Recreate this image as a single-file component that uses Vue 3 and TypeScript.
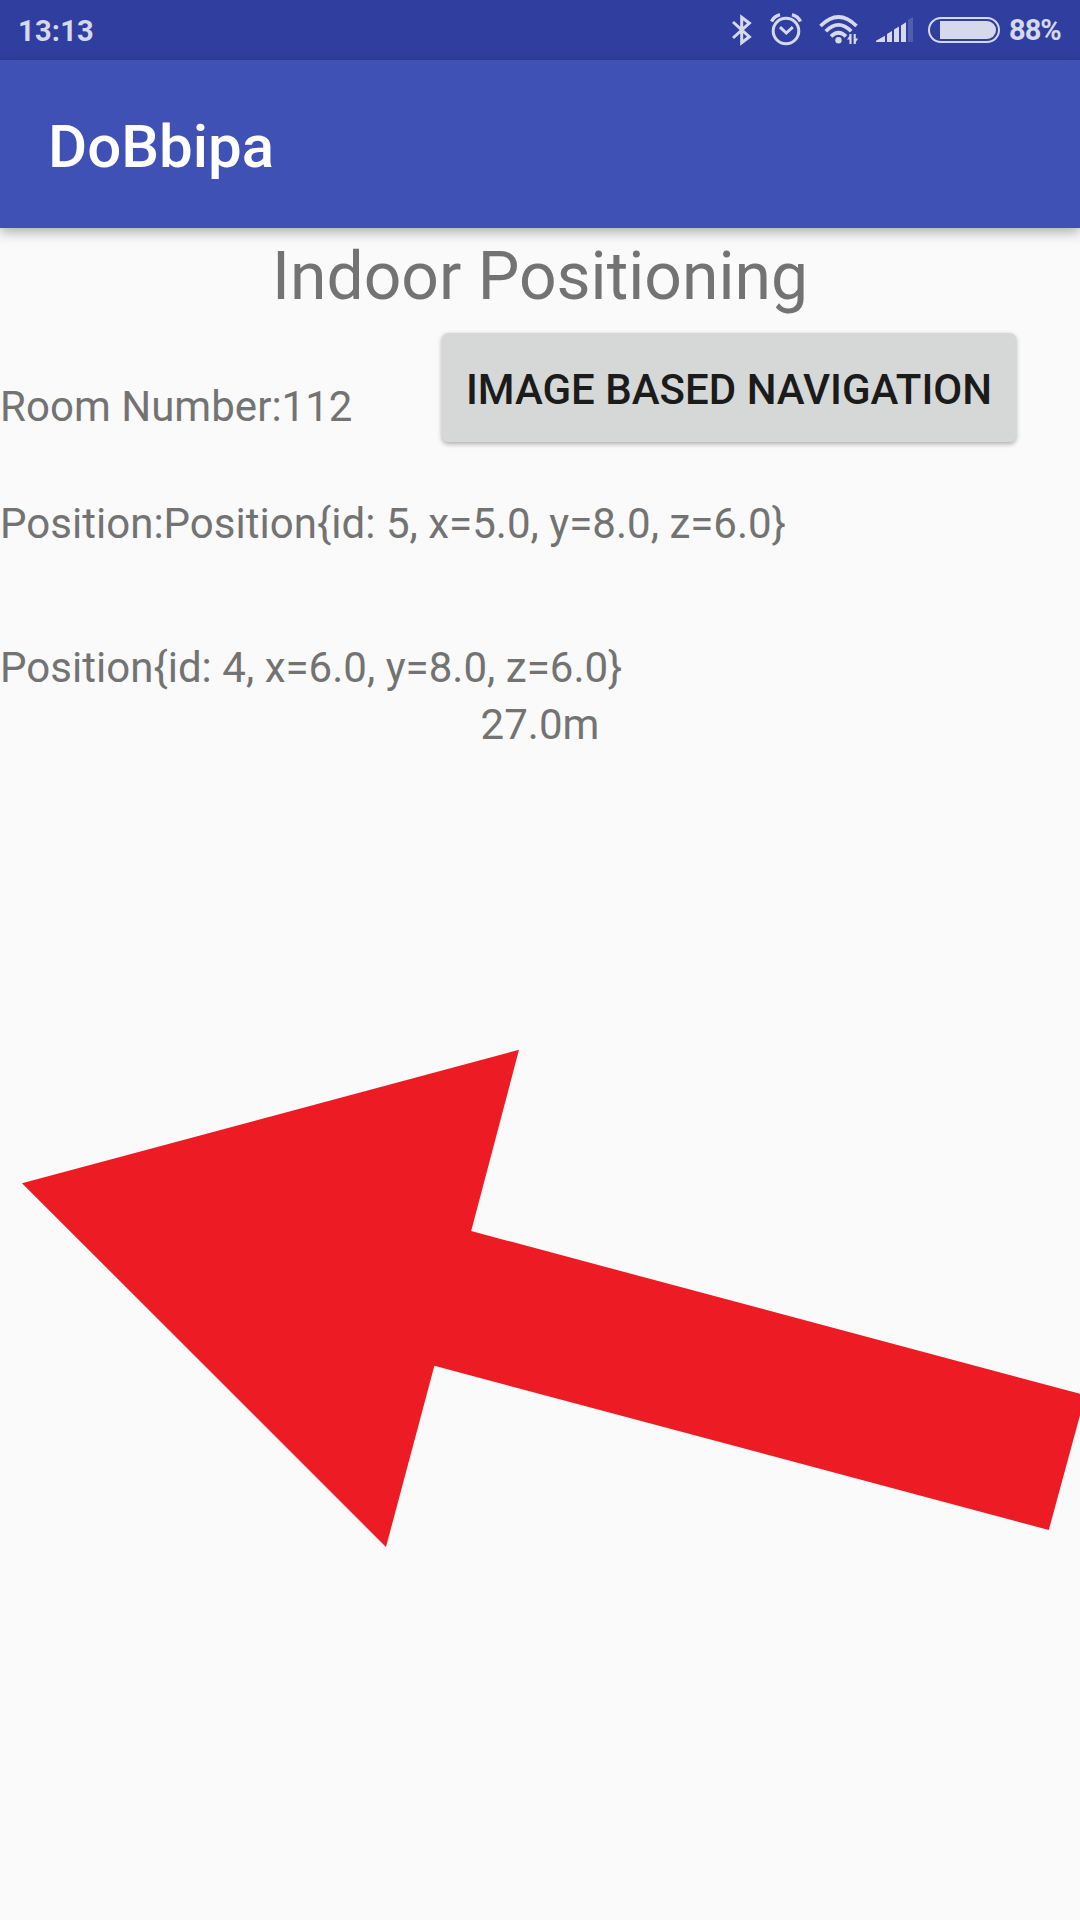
<script setup lang="ts">
import { ref } from 'vue'

interface Position {
  id: number
  x: string
  y: string
  z: string
}

const room = ref(112)
const current = ref<Position>({ id: 5, x: '5.0', y: '8.0', z: '6.0' })
const next = ref<Position>({ id: 4, x: '6.0', y: '8.0', z: '6.0' })
const distance = ref('27.0m')

const format = (p: Position): string => `Position{id: ${p.id}, x=${p.x}, y=${p.y}, z=${p.z}}`
</script>

<template>
  <div class="screen">
    <div class="status">
      <span class="clock">13:13</span>
      <div class="icons">
        <svg class="bluetooth" width="20" height="32" viewBox="0 0 20 32" fill="none" stroke="currentColor" stroke-width="3">
          <path d="M1 8 L17.4 22.8 L9.7 28.8 V3.2 L17.4 9.2 L1 24" />
        </svg>
        <svg class="alarm" width="32" height="34" viewBox="0 0 32 34" fill="none" stroke="currentColor" stroke-width="3">
          <circle cx="16" cy="19" r="12.8" />
          <path d="M10 15.2 L16.3 21 L22.8 15.2" />
          <path d="M1.5 9.5 Q4 4.2 10 2.6 M30.5 9.5 Q28 4.2 22 2.6" stroke-width="3.4" />
        </svg>
        <svg class="wifi" width="40" height="32" viewBox="0 0 40 32" fill="none" stroke="currentColor">
          <path d="M1.5 12 Q19.5 -6 37.5 12 M6.8 17.3 Q19.5 4.5 32.2 17.3 M12 22.4 Q19.5 15 27 22.4" stroke-width="3.7" />
          <circle cx="19.5" cy="26.2" r="3.2" fill="currentColor" stroke="none" />
          <path d="M31.5 20 V30 M35.7 20 V30" stroke-width="2.1" />
          <path d="M28 25.5 L31.8 20 V25.5z M39.2 24.5 L35.4 30 V24.5z" fill="currentColor" stroke="none" />
        </svg>
        <svg class="signal" width="38" height="26" viewBox="0 0 38 26" fill="currentColor">
          <path d="M0 25 V23.7 L9 18.7 V25z M11 25 V17 L16 14 V25z M18 25 V12.5 L23 9.5 V25z M25 25 V8.5 L30 5.2 V25z" />
          <path d="M32 25 V3 L37 0 V25z" opacity="0.2" />
        </svg>
        <svg class="battery" width="72" height="26" viewBox="0 0 72 26" fill="none">
          <rect x="1" y="1" width="70" height="24" rx="12" stroke="currentColor" stroke-width="2" />
          <path d="M12 4 H59 A9 9 0 0 1 59 22 H12z" fill="currentColor" />
        </svg>
        <span class="percent">88%</span>
      </div>
    </div>
    <header class="toolbar"><h1>DoBbipa</h1></header>
    <main class="content">
      <h2>Indoor Positioning</h2>
      <div class="room-row">
        <p class="room">Room Number:{{ room }}</p>
        <button type="button">IMAGE BASED NAVIGATION</button>
      </div>
      <p class="current">Position:{{ format(current) }}</p>
      <p class="next">{{ format(next) }}</p>
      <p class="distance">{{ distance }}</p>
      <svg class="arrow" width="1080" height="540" viewBox="0 0 1080 540">
        <path d="M22 163.2 L519 29.8 L471.2 211 L1085.4 375.3 L1048.8 510 L434.4 345.7 L386 527z" fill="#ed1c24" />
      </svg>
    </main>
  </div>
</template>

<style>
body {
  margin: 0;
  background: #fafafa;
}
</style>

<style scoped>
.screen {
  display: flex;
  flex-direction: column;
  width: 1080px;
  height: 1920px;
  overflow: hidden;
  background: #fafafa;
  color: #737373;
  font-family: Roboto, "Noto Sans", sans-serif;
}
.status {
  display: flex;
  flex: none;
  justify-content: space-between;
  align-items: center;
  box-sizing: border-box;
  height: 60px;
  padding: 0 18px;
  background: #303f9f;
  color: #d6d9ec;
  font-size: 29px;
  font-weight: 700;
  line-height: 60px;
}
.clock {
  padding-top: 1px;
  letter-spacing: 0.25px;
}
.icons {
  display: flex;
  align-items: center;
}
.icons svg {
  display: block;
  flex: none;
}
.alarm { margin-left: 18px; margin-bottom: 2px; }
.wifi { margin-left: 17px; }
.signal { margin-left: 17px; }
.battery { margin-left: 14px; }
.percent {
  width: 53px;
  margin-left: 9px;
  letter-spacing: -1px;
}
.toolbar {
  position: relative;
  display: flex;
  flex: none;
  align-items: center;
  box-sizing: border-box;
  height: 168px;
  padding: 6px 0 0 48px;
  background: #3f51b5;
  box-shadow: 0 4px 12px rgba(0, 0, 0, 0.32);
}
h1 {
  margin: 0;
  color: #fff;
  font-size: 60px;
  font-weight: 500;
  line-height: 70px;
}
.content {
  display: flex;
  flex-direction: column;
}
h2 {
  margin: 4px 0 0;
  font-size: 66px;
  font-weight: 400;
  line-height: 89px;
  text-align: center;
}
p {
  margin: 0;
  font-size: 42px;
  letter-spacing: 0.03px;
  line-height: 57px;
  white-space: nowrap;
}
.room-row {
  display: flex;
  justify-content: space-between;
  align-items: flex-start;
  height: 115px;
  padding: 12px 64px 0 0;
}
.room { margin-top: 45px; }
button {
  width: 574px;
  height: 109px;
  padding: 4px 0 0;
  border: 0;
  border-radius: 6px;
  background: #d6d8d7;
  box-shadow: 0 2px 5px rgba(0, 0, 0, 0.32);
  color: #1b1b1b;
  font-family: inherit;
  font-size: 42px;
  font-weight: 500;
  line-height: 50px;
  white-space: nowrap;
}
.current { margin-top: 47px; }
.next { margin-top: 87px; }
.distance { text-align: center; }
.arrow {
  display: block;
  margin-top: 267px;
}
</style>
